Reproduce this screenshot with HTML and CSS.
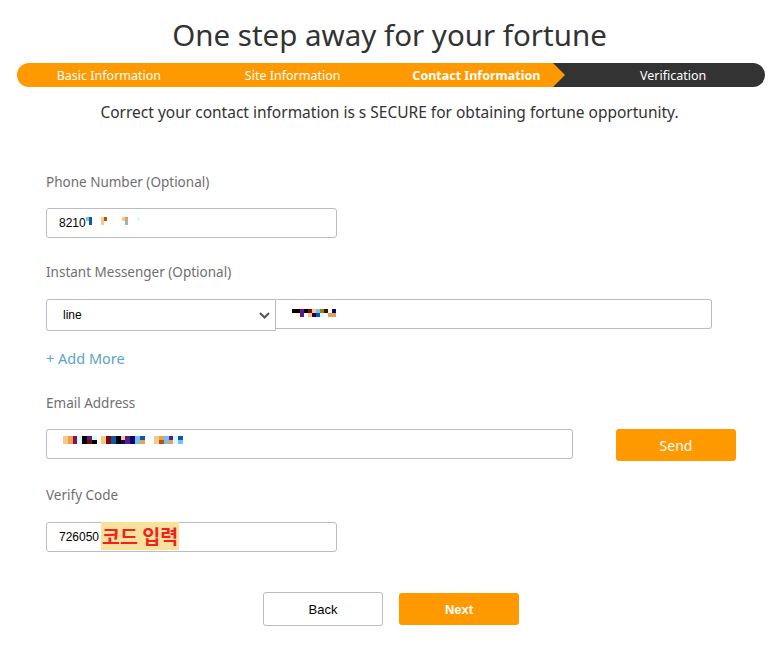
FILE: index.html
```html
<!DOCTYPE html>
<html>
<head>
<meta charset="utf-8">
<link rel="stylesheet" href="styles.css">
</head>
<body>
<div class="page">
  <h1 class="title">One step away for your fortune</h1>
  <div class="steps">
    <div class="step">Basic Information</div>
    <div class="step">Site Information</div>
    <div class="step step-current">Contact Information</div>
    <div class="step">Verification</div>
  </div>
  <p class="subtitle">Correct your contact information is s SECURE for obtaining fortune opportunity.</p>

  <div class="form">
    <div class="label lbl-phone">Phone Number (Optional)</div>
    <div class="input input-short">
      <span class="val">8210</span>
      <span class="pix pix-phone">
        <i class="lb"></i><i class="db"></i><i></i><i></i><i></i><i class="pe"></i><i class="br"></i><i></i><i></i><i></i><i></i><i></i><i class="pe"></i><i class="or"></i><i></i><i></i><i></i><i class="cy"></i>
        <i></i><i class="db"></i><i></i><i></i><i></i><i class="pe"></i><i></i><i></i><i></i><i></i><i></i><i></i><i></i><i class="lb"></i><i></i><i></i><i></i><i></i>
      </span>
    </div>

    <div class="label lbl-im">Instant Messenger (Optional)</div>
    <div class="im-row">
      <div class="select">
        <span class="val">line</span>
        <svg class="chev" width="11" height="7" viewBox="0 0 11 7"><path d="M1 1 L5.5 5.5 L10 1" fill="none" stroke="#555" stroke-width="2"/></svg>
      </div>
      <div class="input input-im">
        <span class="pix pix-im">
          <i class="bk"></i><i class="bk"></i><i class="pu"></i><i class="bk"></i><i class="dr"></i><i class="pe"></i><i class="lb"></i><i class="ol"></i><i class="dbr"></i><i></i><i class="nv"></i>
          <i></i><i class="ly"></i><i class="pu"></i><i></i><i class="pe"></i><i class="nv"></i><i class="db"></i><i class="cy"></i><i></i><i class="or"></i><i class="or"></i>
        </span>
      </div>
    </div>

    <div class="add-more">+ Add More</div>

    <div class="label lbl-email">Email Address</div>
    <div class="email-row">
      <div class="input input-email">
        <span class="pix pix-email">
          <i class="pe"></i><i class="or"></i><i class="mg"></i><i class="cy"></i><i class="bk"></i><i class="pu"></i><i class="cy"></i><i></i><i class="pe"></i><i class="dr"></i><i class="db"></i><i class="bk"></i><i class="pe"></i><i class="pu"></i><i class="nv"></i><i class="lb"></i><i class="db"></i><i></i><i></i><i class="pe"></i><i class="or"></i><i class="lb"></i><i class="pu"></i><i class="cy"></i><i class="db"></i>
          <i class="pe"></i><i class="or"></i><i class="mg"></i><i class="cy"></i><i class="bk"></i><i class="dr"></i><i class="bk"></i><i></i><i class="pe"></i><i class="dr"></i><i class="db"></i><i class="bk"></i><i class="nv"></i><i class="pu"></i><i class="nv"></i><i class="lb"></i><i class="or"></i><i></i><i></i><i class="pe"></i><i class="br"></i><i class="lb"></i><i class="or"></i><i class="cy"></i><i class="lb"></i>
        </span>
      </div>
      <button class="btn btn-send">Send</button>
    </div>

    <div class="label lbl-verify">Verify Code</div>
    <div class="input input-short">
      <span class="val">726050</span><span class="note">코드 입력</span>
    </div>

    <div class="actions">
      <button class="btn btn-back">Back</button>
      <button class="btn btn-next">Next</button>
    </div>
  </div>
</div>
</body>
</html>
```

FILE: styles.css
```css
* { box-sizing: border-box; }
html, body { margin: 0; padding: 0; background: #fff; }
body { font-family: "Noto Sans", "Open Sans", sans-serif; color: #333; }
.page { width: 779px; padding-top: 15px; }

.title {
  margin: 0;
  font-size: 29.5px;
  line-height: 40px;
  font-weight: 400;
  text-align: center;
  color: #333;
}

.steps {
  position: relative;
  margin: 8px 14px 0 17px;
  height: 24px;
  border-radius: 12px;
  background: linear-gradient(to right, #ff9900 0, #ff9900 536px, #333 536px, #333 100%);
  display: flex;
}
.steps::after {
  content: "";
  position: absolute;
  left: 536px;
  top: 0;
  border-top: 12px solid transparent;
  border-bottom: 12px solid transparent;
  border-left: 12px solid #ff9900;
}
.step {
  flex: 1;
  text-align: center;
  color: #fff;
  font-size: 12.5px;
  line-height: 26px;
  height: 24px;
}
.step-current { font-weight: 700; padding-right: 13px; position: relative; z-index: 1; }

.subtitle {
  margin: 13px 0 0;
  text-align: center;
  font-size: 15.5px;
  line-height: 24px;
  color: #333;
}

.form { padding-left: 46px; display: flex; flex-direction: column; align-items: flex-start; }

.label {
  font-size: 13.5px;
  line-height: 20px;
  color: #6f6f6f;
}
.lbl-phone { margin-top: 48px; }
.lbl-im { margin-top: 24px; }
.lbl-email { margin-top: 25px; }
.lbl-verify { margin-top: 24px; }

.input {
  margin-top: 16px;
  height: 30px;
  border: 1px solid #b8bcc4;
  border-radius: 3px;
  background: #fff;
  display: flex;
  align-items: center;
  padding-left: 12px;
  font-family: "Liberation Sans", Arial, sans-serif;
  font-size: 12px;
  color: #000;
}
.input-short { width: 291px; }
.lbl-verify + .input { margin-top: 17px; }

.pix {
  display: inline-grid;
  grid-auto-rows: 4px;
}
.pix i { display: block; }
.pix-phone { grid-template-columns: repeat(18, 3px); margin-top: -4px; }
.pix-im { grid-template-columns: repeat(11, 4px); margin-left: 4px; margin-top: -2px; }
.pix-email { grid-template-columns: repeat(25, 4.8px); margin-left: 4px; margin-top: -8px; }
.bk { background: #000; }
.pu { background: #5b1a8c; }
.dr { background: #7a0a0a; }
.pe { background: #f8c888; }
.lb { background: #7bbef0; }
.db { background: #0a5aa8; }
.ol { background: #a08000; }
.dbr { background: #4a0a0a; }
.nv { background: #0a0a60; }
.ly { background: #fff4c8; }
.cy { background: #d4fbff; }
.or { background: #e8a050; }
.br { background: #a85a10; }
.mg { background: #8a1050; }

.im-row { display: flex; align-items: flex-start; margin-top: 17px; }
.select {
  width: 230px;
  height: 32px;
  border: 1px solid #b8bcc4;
  border-radius: 3px 0 0 3px;
  display: flex;
  align-items: center;
  justify-content: space-between;
  padding: 0 5px 0 16px;
  font-family: "Liberation Sans", Arial, sans-serif;
  font-size: 12px;
  color: #000;
}
.chev { margin-top: 1px; }
.input-im {
  margin-top: 0;
  width: 436px;
  height: 30px;
  border-left: none;
  border-radius: 0 3px 3px 0;
}

.add-more {
  margin-top: 17px;
  font-size: 14.5px;
  line-height: 20px;
  color: #5aa3cc;
}

.email-row { display: flex; align-items: flex-start; margin-top: 16px; }
.input-email { margin-top: 0; width: 527px; }

.btn {
  font-family: "Liberation Sans", Arial, sans-serif;
  border-radius: 3px;
  cursor: pointer;
}
.btn-send {
  margin-left: 43px;
  width: 120px;
  height: 32px;
  border: none;
  background: #ff9900;
  color: #fff;
  font-family: "Noto Sans", sans-serif;
  font-size: 14px;
}

.note {
  margin-left: 2px;
  background: #f7e19b;
  color: #ee2222;
  font-family: "Noto Sans CJK KR", sans-serif;
  font-weight: 700;
  font-size: 19.5px;
  line-height: 28px;
  padding: 0 1px;
  margin-top: -2px;
}

.actions {
  align-self: stretch;
  display: flex;
  margin: 40px 0 0 217px;
  gap: 16px;
  align-items: center;
}
.btn-back {
  width: 120px;
  height: 34px;
  border: 1px solid #b8bcc4;
  background: #fff;
  color: #000;
  font-size: 13px;
}
.btn-next {
  width: 120px;
  height: 32px;
  border: none;
  background: #ff9900;
  color: #fff;
  font-size: 13px;
  font-weight: 700;
}
```
